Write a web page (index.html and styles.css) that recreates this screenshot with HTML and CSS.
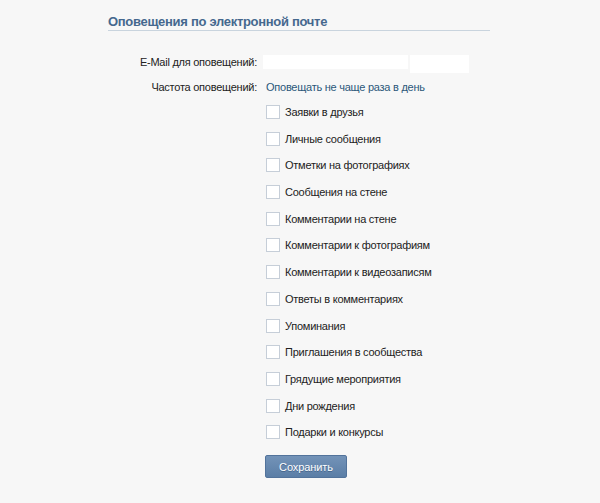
FILE: index.html
```html
<!DOCTYPE html>
<html lang="ru">
<head>
<meta charset="utf-8">
<link rel="stylesheet" href="styles.css">
</head>
<body>
<div class="section">
  <div class="title">Оповещения по электронной почте</div>
  <div class="form">
    <div class="row email-row">
      <div class="label">E-Mail для оповещений:</div>
      <div class="value inputs">
        <div class="field field-main"></div>
        <div class="field field-side"></div>
      </div>
    </div>
    <div class="row freq-row">
      <div class="label">Частота оповещений:</div>
      <div class="value"><span class="link">Оповещать не чаще раза в день</span></div>
    </div>
    <div class="row checks-row">
      <div class="label"></div>
      <div class="value checks">
        <label class="check"><span class="box"></span>Заявки в друзья</label>
        <label class="check"><span class="box"></span>Личные сообщения</label>
        <label class="check"><span class="box"></span>Отметки на фотографиях</label>
        <label class="check"><span class="box"></span>Сообщения на стене</label>
        <label class="check"><span class="box"></span>Комментарии на стене</label>
        <label class="check"><span class="box"></span>Комментарии к фотографиям</label>
        <label class="check"><span class="box"></span>Комментарии к видеозаписям</label>
        <label class="check"><span class="box"></span>Ответы в комментариях</label>
        <label class="check"><span class="box"></span>Упоминания</label>
        <label class="check"><span class="box"></span>Приглашения в сообщества</label>
        <label class="check"><span class="box"></span>Грядущие мероприятия</label>
        <label class="check"><span class="box"></span>Дни рождения</label>
        <label class="check"><span class="box"></span>Подарки и конкурсы</label>
      </div>
    </div>
    <div class="row button-row">
      <div class="label"></div>
      <div class="value"><button class="save">Сохранить</button></div>
    </div>
  </div>
</div>
</body>
</html>
```
FILE: styles.css
```css
html, body {
  margin: 0;
  padding: 0;
  background: #f7f7f7;
}
body {
  font-family: "Liberation Sans", Arial, sans-serif;
  font-size: 11px;
  line-height: 14px;
  letter-spacing: -0.25px;
  color: #222;
}
.section {
  width: 382px;
  padding: 14px 0 0 108px;
}
.title {
  font-weight: bold;
  font-size: 13px;
  line-height: 16px;
  letter-spacing: -0.3px;
  color: #45688e;
  border-bottom: 1px solid #c9d4de;
}
.form {
  padding-top: 24px;
  display: flex;
  flex-direction: column;
}
.row {
  display: grid;
  grid-template-columns: 149px auto;
  column-gap: 6px;
}
.label {
  text-align: right;
  color: #222;
}
.inputs {
  display: flex;
  gap: 2px;
  align-items: flex-start;
}
.field {
  background: #fff;
}
.field-main {
  width: 145px;
  height: 14px;
}
.field-side {
  width: 59px;
  height: 18px;
}
.freq-row {
  margin-top: 7px;
}
.freq-row .value {
  padding-left: 3px;
}
.link {
  color: #2b587a;
}
.checks-row {
  margin-top: 11px;
}
.checks {
  display: flex;
  flex-direction: column;
  gap: 12.7px;
  padding-left: 3px;
}
.check {
  display: flex;
  align-items: center;
  height: 14px;
  color: #222;
}
.box {
  box-sizing: border-box;
  width: 14px;
  height: 14px;
  border: 1px solid #c6ced8;
  background: #fff;
  margin-right: 5px;
  flex: none;
}
.button-row {
  margin-top: 16px;
}
.button-row .value {
  padding-left: 2px;
}
.save {
  box-sizing: border-box;
  width: 82px;
  height: 23px;
  padding: 0;
  border: 1px solid #52739b;
  border-radius: 2px;
  background: linear-gradient(#7393b8, #5b7ea6);
  color: #fff;
  font-family: "Liberation Sans", Arial, sans-serif;
  font-size: 11px;
  letter-spacing: -0.1px;
  text-shadow: 0 1px 0 #46668c;
}
```
